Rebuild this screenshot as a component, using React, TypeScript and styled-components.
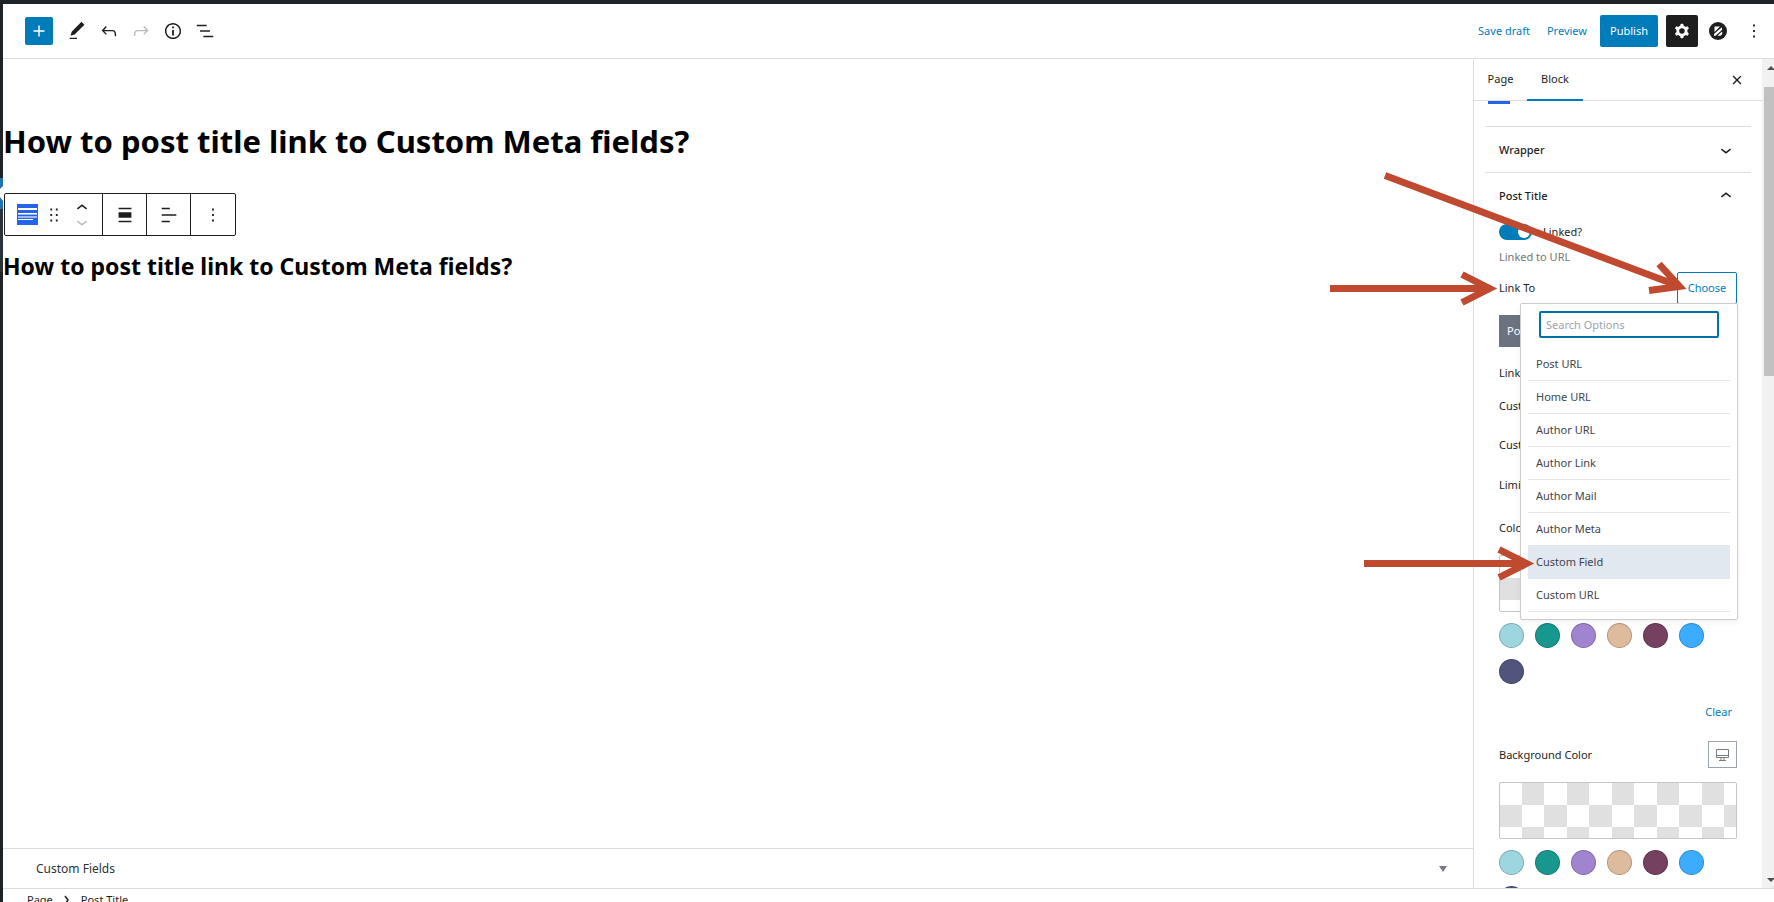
import React from 'react';
import styled, { createGlobalStyle, css } from 'styled-components';

const blue = '#007cba';
const ink = '#1e1e1e';
const line = '#ddd';

const GlobalStyle = createGlobalStyle`
  *, *::before, *::after { box-sizing: border-box; }
  body {
    margin: 0;
    background: #fff;
    color: ${ink};
    font-family: 'Noto Sans', 'Open Sans', sans-serif;
    font-size: 11px;
    line-height: 16px;
  }
  button, input { font: inherit; color: inherit; }
  button { padding: 0; border: 0; background: none; cursor: pointer; }
  h1, h2, ul, p { margin: 0; padding: 0; }
`;

const Page = styled.div`
  position: relative;
  display: flex;
  flex-direction: column;
  height: 100vh;
  overflow: hidden;
  border-top: 4px solid #1d2327;
`;

const Columns = styled.div`
  display: flex;
  flex: 1;
  min-height: 0;
`;

const AdminMenu = styled.div`
  flex: none;
  width: 3px;
  background: #1d2327;
`;

const MenuEdge = styled.svg`
  display: block;
  width: 3px;
  margin-top: 174px;
`;

const Editor = styled.div`
  display: flex;
  flex: 1;
  min-width: 0;
  flex-direction: column;
`;

const Header = styled.header`
  display: flex;
  flex: none;
  align-items: center;
  justify-content: space-between;
  height: 55px;
  padding: 0 4px 0 22px;
  border-bottom: 1px solid ${line};
`;

const Tools = styled.div`
  display: flex;
  align-items: center;
  gap: 4px;
`;

const IconButton = styled.button<{ $muted?: boolean }>`
  display: flex;
  align-items: center;
  justify-content: center;
  width: 28px;
  height: 28px;
  color: ${(p) => (p.$muted ? '#bbb' : ink)};
`;

const InsertButton = styled(IconButton)`
  margin-right: 6px;
  border-radius: 2px;
  background: ${blue};
  color: #fff;
`;

const Actions = styled.div`
  display: flex;
  align-items: center;
`;

const TextActions = styled.div`
  display: flex;
  gap: 17px;
  margin-right: 13px;
`;

const TextButton = styled.button`
  color: ${blue};
`;

const PublishButton = styled.button`
  height: 32px;
  margin-right: 8px;
  width: 58px;
  border-radius: 2px;
  background: ${blue};
  color: #fff;
`;

const SettingsButton = styled(IconButton)`
  width: 32px;
  height: 32px;
  border-radius: 2px;
  background: ${ink};
  color: #fff;
`;

const LogoButton = styled(IconButton)`
  width: 40px;
`;

const MenuButton = styled(IconButton)`
  width: 32px;
`;

const Body = styled.div`
  display: flex;
  flex: 1;
  min-height: 0;
`;

const Main = styled.main`
  display: flex;
  flex: 1;
  min-width: 0;
  flex-direction: column;
`;

const Canvas = styled.div`
  flex: 1;
  padding-top: 60px;
  color: #000;
`;

const PageTitle = styled.h1`
  font-size: 31px;
  line-height: 44px;
  font-weight: 700;
`;

const PostTitle = styled.h2`
  margin-top: 13px;
  font-size: 23px;
  line-height: 34px;
  font-weight: 700;
`;

const BlockToolbar = styled.div`
  display: inline-flex;
  height: 43px;
  margin: 30px 0 0 1px;
  border: 1px solid ${ink};
  border-radius: 2px;
  color: ${ink};
`;

const ToolbarGroup = styled.div`
  display: flex;
  align-items: center;
  justify-content: center;
  width: 44px;

  & + & { border-left: 1px solid ${ink}; }
  &:first-child { width: 97px; padding-left: 6px; }
  &:last-child { width: 45px; }
`;

const BlockIcon = styled.button`
  width: 21px;
  height: 21px;
  margin-right: 2px;
  svg { display: block; }
`;

const Movers = styled.div`
  display: flex;
  flex-direction: column;
  gap: 2px;
`;

const Mover = styled(IconButton)`
  height: 12px;
  overflow: hidden;
`;

const MetaBox = styled.button`
  display: flex;
  flex: none;
  align-items: center;
  justify-content: space-between;
  height: 40px;
  padding: 0 26px 0 33px;
  border-top: 1px solid ${line};
  color: #2c3338;
  font-size: 12px;
`;

const Sidebar = styled.aside`
  display: flex;
  flex: none;
  width: 301px;
  border-left: 1px solid ${line};
`;

const Panel = styled.div`
  display: flex;
  flex: 1;
  min-width: 0;
  flex-direction: column;
  overflow: hidden;
`;

const TabBar = styled.div`
  display: flex;
  flex: none;
  align-items: stretch;
  height: 42px;
  padding-right: 11px;
  border-bottom: 1px solid ${line};
`;

const Tab = styled.button<{ $active?: boolean }>`
  width: ${(p) => (p.$active ? 56 : 53)}px;
  margin-bottom: -1px;
  border-bottom: 2px solid ${(p) => (p.$active ? blue : 'transparent')};
`;

const CloseButton = styled(IconButton)`
  height: 41px;
  margin-left: auto;
`;

const Scroller = styled.div`
  flex: 1;
  min-height: 0;
  overflow: hidden;
  padding: 0 11px;
`;

const TabMarker = styled.div`
  width: 22px;
  height: 3px;
  margin: 0 0 22px 3px;
  background: #2563eb;
`;

const SectionToggle = styled.button`
  display: flex;
  width: 100%;
  height: 46px;
  align-items: center;
  justify-content: space-between;
  padding: 0 14px;
  border-top: 1px solid ${line};
  font-weight: 500;
`;

const Section = styled.div`
  padding: 5px 14px 0;
`;

const ToggleRow = styled.label`
  display: flex;
  align-items: center;
  gap: 11px;
  height: 18px;
`;

const Switch = styled.input`
  appearance: none;
  display: flex;
  align-items: center;
  justify-content: flex-end;
  width: 33px;
  height: 16px;
  margin: 0;
  padding: 0 2px;
  border-radius: 8px;
  background: ${blue};

  &::after {
    content: '';
    width: 12px;
    height: 12px;
    border-radius: 50%;
    background: #fff;
  }
`;

const Help = styled.p`
  margin: 8px 0 7px;
  color: #757575;
`;

const Row = styled.div<{ $height: number }>`
  position: relative;
  display: flex;
  height: ${(p) => p.$height}px;
  align-items: center;
  justify-content: space-between;
`;

const ChooseButton = styled.button`
  width: 60px;
  height: 32px;
  border: 1px solid ${blue};
  border-radius: 2px;
  color: ${blue};
`;

const Popover = styled.div`
  position: absolute;
  z-index: 1;
  top: 31px;
  right: -1px;
  width: 218px;
  height: 317px;
  overflow: hidden;
  padding: 7px;
  border: 1px solid #ccc;
  border-radius: 2px;
  background: #fff;
  box-shadow: 0 2px 6px rgba(0, 0, 0, 0.06);
`;

const Search = styled.input`
  display: block;
  width: 180px;
  height: 27px;
  margin: 0 11px 10px;
  padding: 0 5px;
  border: 2px solid #0071a8;
  border-radius: 2px;
  outline: 0;

  &::placeholder { color: #9ca3af; opacity: 1; }
`;

const Options = styled.ul`
  list-style: none;
`;

const Option = styled.li<{ $active?: boolean }>`
  height: 33px;
  border-bottom: 1px solid #e5e7eb;
  ${(p) => p.$active && css`background: #e2e8f0; border-color: #e2e8f0;`}

  button {
    width: 100%;
    height: 32px;
    padding: 0 8px;
    color: #3f454d;
    text-align: left;
  }
`;

const Picked = styled.button`
  display: block;
  height: 32px;
  margin: 11px 0 10px;
  padding: 0 8px;
  background: #6b7280;
  color: #fff;
`;

const Checker = styled.button`
  display: block;
  width: 100%;
  height: 57px;
  margin-top: 3px;
  border: 1px solid #c6c6c6;
  border-radius: 2px;
  background-color: #fff;
  background-image:
    repeating-linear-gradient(45deg, #e0e0e0 25%, transparent 0, transparent 75%, #e0e0e0 0, #e0e0e0),
    repeating-linear-gradient(45deg, #e0e0e0 25%, transparent 0, transparent 75%, #e0e0e0 0, #e0e0e0);
  background-position: 0 0, 23px 23px;
  background-size: 45px 45px;
  background-origin: border-box;
`;

const Swatches = styled.div`
  display: flex;
  flex-wrap: wrap;
  gap: 11px;
  margin-top: 11px;
`;

const Swatch = styled.button<{ $color: string }>`
  width: 25px;
  height: 25px;
  border: 1px solid rgba(0, 0, 0, 0.2);
  border-radius: 50%;
  background: ${(p) => p.$color};
`;

const ClearRow = styled.div`
  display: flex;
  justify-content: flex-end;
  padding: 20px 5px 21px;
  button { color: ${blue}; }
`;

const DeviceButton = styled.button`
  display: flex;
  align-items: center;
  justify-content: center;
  width: 29px;
  height: 27px;
  border: 1px solid #9ca3af;
`;

const ScrollTrack = styled.div`
  display: flex;
  flex: none;
  flex-direction: column;
  width: 12px;
  overflow: hidden;
  background: #f1f1f1;
`;

const ScrollThumb = styled.div`
  height: 289px;
  margin: 0 0 auto 2px;
  background: #c1c1c1;
`;

const ScrollArrow = styled.svg`
  flex: none;
  width: 16px;
  height: 28px;
  fill: #505050;
`;

const Footer = styled.footer`
  display: flex;
  flex: none;
  gap: 4px;
  height: 14px;
  padding: 3px 0 0 24px;
  border-top: 1px solid ${line};
  overflow: hidden;

  svg { flex: none; margin-top: -2px; }
`;

const Arrows = styled.svg`
  position: absolute;
  z-index: 2;
  top: -4px;
  right: 0;
  pointer-events: none;
  fill: none;
  stroke: #bf4a30;
  stroke-width: 7;
`;

const icons = {
  plus: 'M18 11.2h-5.2V6h-1.6v5.2H6v1.6h5.2V18h1.6v-5.2H18z',
  edit: 'M20.1 5.1L16.9 2 6.2 12.7l-1.3 4.4 4.5-1.3L20.1 5.1zM4 20.8h8v-1.5H4v1.5z',
  undo: 'M18.3 11.7c-.6-.6-1.4-.9-2.3-.9H6.7l2.9-3.3-1.1-1-4.5 5L8.5 16l1-1-2.7-2.7H16c.5 0 .9.2 1.3.5 1 1 1 3.4 1 4.5v.3h1.5v-.2c0-1.5 0-4.3-1.5-5.7z',
  redo: 'M15.6 6.5l-1.1 1 2.9 3.3H8c-.9 0-1.7.3-2.3.9-1.4 1.5-1.4 4.2-1.4 5.6v.2h1.5v-.3c0-1.1 0-3.5 1-4.5.3-.3.7-.5 1.3-.5h9.2L14.5 15l1.1 1.1 4.6-4.6-4.6-5z',
  info: 'M12 3.2c-4.8 0-8.8 3.9-8.8 8.8 0 4.8 3.9 8.8 8.8 8.8 4.8 0 8.8-3.9 8.8-8.8 0-4.8-4-8.8-8.8-8.8zm0 16c-4 0-7.2-3.3-7.2-7.2C4.8 8 8 4.8 12 4.8s7.2 3.3 7.2 7.2c0 4-3.2 7.2-7.2 7.2zM11 17h2v-6h-2v6zm0-8h2V7h-2v2z',
  list: 'M13.8 5.2H3v1.5h10.8V5.2zm-3.6 12v1.5H21v-1.5H10.2zm7.2-6H6.6v1.5h10.8v-1.5z',
  cog: 'M10.289 4.836A1 1 0 0111.275 4h1.306a1 1 0 01.987.836l.244 1.466c.787.26 1.503.679 2.108 1.218l1.393-.522a1 1 0 011.216.437l.653 1.13a1 1 0 01-.23 1.273l-1.148.944a6.025 6.025 0 010 2.435l1.149.946a1 1 0 01.23 1.272l-.653 1.13a1 1 0 01-1.216.437l-1.394-.522c-.605.54-1.32.958-2.108 1.218l-.244 1.466a1 1 0 01-.987.836h-1.306a1 1 0 01-.986-.836l-.244-1.466a5.995 5.995 0 01-2.108-1.218l-1.394.522a1 1 0 01-1.217-.436l-.653-1.131a1 1 0 01.23-1.272l1.149-.946a6.026 6.026 0 010-2.435l-1.148-.944a1 1 0 01-.23-1.272l.653-1.131a1 1 0 011.217-.437l1.393.522a5.994 5.994 0 012.108-1.218l.244-1.466zM14.929 12a3 3 0 11-6 0 3 3 0 016 0z',
  more: 'M13 19h-2v-2h2v2zm0-6h-2v-2h2v2zm0-6h-2V5h2v2z',
  close: 'M12 13.06l3.712 3.713 1.061-1.06L13.061 12l3.712-3.712-1.06-1.06L12 10.938 8.288 7.227l-1.061 1.06L10.939 12l-3.712 3.712 1.06 1.061L12 13.061z',
  down: 'M17.5 11.6L12 16l-5.5-4.4.9-1.2L12 14l4.5-3.6 1 1.2z',
  up: 'M6.5 12.4L12 8l5.5 4.4-.9 1.2L12 10l-4.5 3.6-1-1.2z',
  drag: 'M8 7h2V5H8v2zm0 6h2v-2H8v2zm0 6h2v-2H8v2zm6-14v2h2V5h-2zm0 8h2v-2h-2v2zm0 6h2v-2h-2v2z',
  alignBlock: 'M5 15h14V9H5v6zm0 4.8h14v-1.5H5v1.5zM5 4.2v1.5h14V4.2H5z',
  alignText: 'M4 19.8h8.9v-1.5H4v1.5zm8.9-15.6H4v1.5h8.9V4.2zm-8.9 7v1.5h16v-1.5H4z',
};

function Icon({ name, size = 22 }: { name: keyof typeof icons; size?: number }) {
  return (
    <svg width={size} height={size} viewBox="0 0 24 24" fill="currentColor" fillRule="evenodd" aria-hidden="true">
      <path d={icons[name]} />
    </svg>
  );
}

const palette = ['#9dd6df', '#18978f', '#a084cf', '#dfbb9d', '#764060', '#3bacff', '#51557e'];
const options = [
  'Post URL', 'Home URL', 'Author URL', 'Author Link',
  'Author Mail', 'Author Meta', 'Custom Field', 'Custom URL',
];

function Palette({ label }: { label: string }) {
  return (
    <Swatches>
      {palette.map((color) => (
        <Swatch key={color} $color={color} aria-label={`${label} ${color}`} />
      ))}
    </Swatches>
  );
}

export default function App() {
  return (
    <Page>
      <GlobalStyle />
      <Columns>
        <AdminMenu>
          <MenuEdge height="94" viewBox="0 0 3 94">
            <path d="M0 31h3v63H0z" fill="#2c3338" />
            <path d="M0 0h3v31H0z" fill="#2271b1" />
            <path d="M3 8L0 11v8l3 4z" fill="#fff" />
          </MenuEdge>
        </AdminMenu>
        <Editor>
          <Header>
            <Tools>
              <InsertButton aria-label="Add block"><Icon name="plus" /></InsertButton>
              <IconButton aria-label="Edit"><Icon name="edit" /></IconButton>
              <IconButton aria-label="Undo"><Icon name="undo" /></IconButton>
              <IconButton aria-label="Redo" $muted><Icon name="redo" /></IconButton>
              <IconButton aria-label="Details"><Icon name="info" /></IconButton>
              <IconButton aria-label="List view"><Icon name="list" /></IconButton>
            </Tools>
            <Actions>
              <TextActions>
                <TextButton>Save draft</TextButton>
                <TextButton>Preview</TextButton>
              </TextActions>
              <PublishButton>Publish</PublishButton>
              <SettingsButton aria-label="Settings"><Icon name="cog" /></SettingsButton>
              <LogoButton aria-label="Blocks">
                <svg width="18" height="18" viewBox="0 0 18 18" aria-hidden="true">
                  <circle cx="9" cy="9" r="9" fill={ink} />
                  <path d="M5.500 4.500H11L5.500 10zM12.800 5.200l.4 2.600-6.700 6H5v-1.800zM13 9.500c1 2.500-.6 4.300-2.500 4.300H8.500z" fill="#fff" />
                </svg>
              </LogoButton>
              <MenuButton aria-label="Options"><Icon name="more" /></MenuButton>
            </Actions>
          </Header>
          <Body>
            <Main>
              <Canvas>
                <PageTitle>How to post title link to Custom Meta fields?</PageTitle>
                <BlockToolbar>
                  <ToolbarGroup>
                    <BlockIcon aria-label="Post Title">
                      <svg width="21" height="21" viewBox="0 0 21 21">
                        <path d="M0 0h21v21H0z" fill="#2563eb" />
                        <path d="M1 4h19v2H1zM1 9h19v1H1zM1 15h15v1H1z" fill="#fff" />
                        <path d="M1 10h19v1H1zM1 12h19v2H1z" fill="#9db8f6" />
                      </svg>
                    </BlockIcon>
                    <IconButton aria-label="Drag"><Icon name="drag" /></IconButton>
                    <Movers>
                      <Mover aria-label="Move up"><Icon name="up" /></Mover>
                      <Mover aria-label="Move down" $muted><Icon name="down" /></Mover>
                    </Movers>
                  </ToolbarGroup>
                  <ToolbarGroup><IconButton aria-label="Align"><Icon name="alignBlock" /></IconButton></ToolbarGroup>
                  <ToolbarGroup><IconButton aria-label="Align text"><Icon name="alignText" /></IconButton></ToolbarGroup>
                  <ToolbarGroup><IconButton aria-label="More"><Icon name="more" /></IconButton></ToolbarGroup>
                </BlockToolbar>
                <PostTitle>How to post title link to Custom Meta fields?</PostTitle>
              </Canvas>
              <MetaBox>
                Custom Fields
                <svg width="8" height="6" viewBox="0 0 8 6" aria-hidden="true"><path d="M0 0h8L4 6z" fill="#787c82" /></svg>
              </MetaBox>
            </Main>
            <Sidebar>
              <Panel>
                <TabBar>
                  <Tab>Page</Tab>
                  <Tab $active>Block</Tab>
                  <CloseButton aria-label="Close settings"><Icon name="close" /></CloseButton>
                </TabBar>
                <Scroller>
                  <TabMarker />
                  <SectionToggle>Wrapper<Icon name="down" /></SectionToggle>
                  <SectionToggle>Post Title<Icon name="up" /></SectionToggle>
                  <Section>
                    <ToggleRow>
                      <Switch type="checkbox" defaultChecked />
                      Linked?
                    </ToggleRow>
                    <Help>Linked to URL</Help>
                    <Row $height={32}>
                      Link To
                      <ChooseButton>Choose</ChooseButton>
                      <Popover>
                        <Search type="text" placeholder="Search Options" aria-label="Search Options" />
                        <Options>
                          {options.map((name) => (
                            <Option key={name} $active={name === 'Custom Field'}>
                              <button>{name}</button>
                            </Option>
                          ))}
                        </Options>
                      </Popover>
                    </Row>
                    <Picked>Post</Picked>
                    <Row $height={32}>Link</Row>
                    <Row $height={34}>Custom</Row>
                    <Row $height={44}>Custom</Row>
                    <Row $height={36}>Limit</Row>
                    <Row $height={49}>Color</Row>
                    <Checker aria-label="Color" />
                    <Palette label="Color" />
                    <ClearRow><button>Clear</button></ClearRow>
                    <Row $height={27}>
                      Background Color
                      <DeviceButton aria-label="Desktop">
                        <svg width="13" height="12" viewBox="0 0 13 12" fill="none" stroke="#787c82" aria-hidden="true">
                          <path d="M.5.5h12v8H.5zM1 6.500h11M5 9v2M8 9v2M3 11.500h7" />
                        </svg>
                      </DeviceButton>
                    </Row>
                    <Row $height={11} />
                    <Checker aria-label="Background Color" />
                    <Palette label="Background Color" />
                  </Section>
                </Scroller>
              </Panel>
              <ScrollTrack aria-hidden="true">
                <ScrollArrow viewBox="0 0 16 28"><path d="M5 11l4-4 4 4z" /></ScrollArrow>
                <ScrollThumb />
                <ScrollArrow viewBox="0 0 16 28"><path d="M5 18h8l-4 4z" /></ScrollArrow>
              </ScrollTrack>
            </Sidebar>
          </Body>
          <Footer>
            <span>Page</span>
            <svg width="20" height="20" viewBox="0 0 20 20" fill="none" stroke={ink} strokeWidth="1.500"><path d="M8 6l3 4-3 4" /></svg>
            <span>Post Title</span>
          </Footer>
        </Editor>
      </Columns>
      <Arrows width="474" height="620" viewBox="1300 0 474 620" aria-hidden="true">
        <path d="M1330 288.500H1488M1462 274.500L1489.500 288.500L1462 302.500" />
        <path d="M1364 563.500H1525M1499 549.500L1526.500 563.500L1499 577.500" />
        <path d="M1385 175.500L1678 285.800M1659 264L1679.500 286.500L1649 290.500" />
      </Arrows>
    </Page>
  );
}
